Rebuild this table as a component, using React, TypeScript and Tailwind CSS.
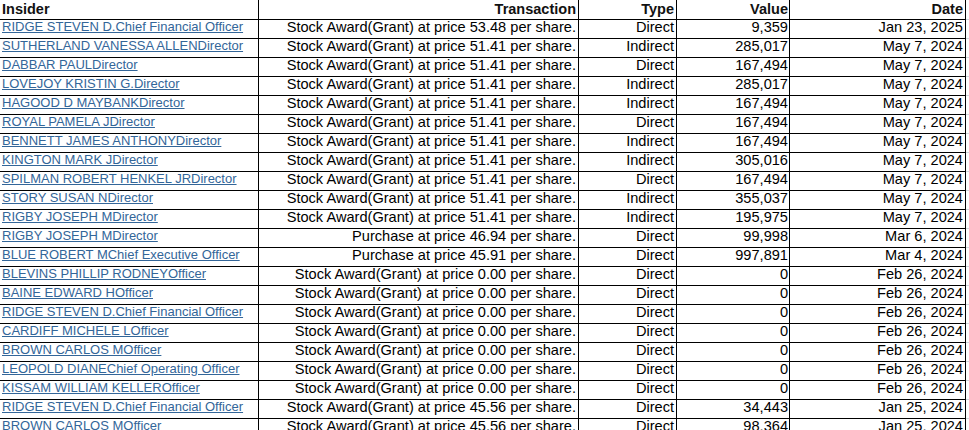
import React from "react";

type Row = [string, string, string, string, string];

const rows: Row[] = [
  ["RIDGE STEVEN D.Chief Financial Officer", "Stock Award(Grant) at price 53.48 per share.", "Direct", "9,359", "Jan 23, 2025"],
  ["SUTHERLAND VANESSA ALLENDirector", "Stock Award(Grant) at price 51.41 per share.", "Indirect", "285,017", "May 7, 2024"],
  ["DABBAR PAULDirector", "Stock Award(Grant) at price 51.41 per share.", "Direct", "167,494", "May 7, 2024"],
  ["LOVEJOY KRISTIN G.Director", "Stock Award(Grant) at price 51.41 per share.", "Indirect", "285,017", "May 7, 2024"],
  ["HAGOOD D MAYBANKDirector", "Stock Award(Grant) at price 51.41 per share.", "Indirect", "167,494", "May 7, 2024"],
  ["ROYAL PAMELA JDirector", "Stock Award(Grant) at price 51.41 per share.", "Direct", "167,494", "May 7, 2024"],
  ["BENNETT JAMES ANTHONYDirector", "Stock Award(Grant) at price 51.41 per share.", "Indirect", "167,494", "May 7, 2024"],
  ["KINGTON MARK JDirector", "Stock Award(Grant) at price 51.41 per share.", "Indirect", "305,016", "May 7, 2024"],
  ["SPILMAN ROBERT HENKEL JRDirector", "Stock Award(Grant) at price 51.41 per share.", "Direct", "167,494", "May 7, 2024"],
  ["STORY SUSAN NDirector", "Stock Award(Grant) at price 51.41 per share.", "Indirect", "355,037", "May 7, 2024"],
  ["RIGBY JOSEPH MDirector", "Stock Award(Grant) at price 51.41 per share.", "Indirect", "195,975", "May 7, 2024"],
  ["RIGBY JOSEPH MDirector", "Purchase at price 46.94 per share.", "Direct", "99,998", "Mar 6, 2024"],
  ["BLUE ROBERT MChief Executive Officer", "Purchase at price 45.91 per share.", "Direct", "997,891", "Mar 4, 2024"],
  ["BLEVINS PHILLIP RODNEYOfficer", "Stock Award(Grant) at price 0.00 per share.", "Direct", "0", "Feb 26, 2024"],
  ["BAINE EDWARD HOfficer", "Stock Award(Grant) at price 0.00 per share.", "Direct", "0", "Feb 26, 2024"],
  ["RIDGE STEVEN D.Chief Financial Officer", "Stock Award(Grant) at price 0.00 per share.", "Direct", "0", "Feb 26, 2024"],
  ["CARDIFF MICHELE LOfficer", "Stock Award(Grant) at price 0.00 per share.", "Direct", "0", "Feb 26, 2024"],
  ["BROWN CARLOS MOfficer", "Stock Award(Grant) at price 0.00 per share.", "Direct", "0", "Feb 26, 2024"],
  ["LEOPOLD DIANEChief Operating Officer", "Stock Award(Grant) at price 0.00 per share.", "Direct", "0", "Feb 26, 2024"],
  ["KISSAM WILLIAM KELLEROfficer", "Stock Award(Grant) at price 0.00 per share.", "Direct", "0", "Feb 26, 2024"],
  ["RIDGE STEVEN D.Chief Financial Officer", "Stock Award(Grant) at price 45.56 per share.", "Direct", "34,443", "Jan 25, 2024"],
  ["BROWN CARLOS MOfficer", "Stock Award(Grant) at price 45.56 per share.", "Direct", "98,364", "Jan 25, 2024"],
];

const grid = "grid grid-cols-[259px_320px_98px_113px_176px_3px]";
const cell = "border-r border-b border-black overflow-hidden whitespace-nowrap";

export default function App() {
  return (
    <div
      className="w-[969px] h-[430px] overflow-hidden bg-white text-black"
      style={{ fontFamily: "'Liberation Sans', Arial, sans-serif" }}
    >
      <div className={`${grid} h-[20px] font-bold text-[14.5px] leading-[19px] text-[#111]`}>
        <div className={`${cell} pl-[2px] text-left`}>Insider</div>
        <div className={`${cell} pr-[2px] text-right`}>Transaction</div>
        <div className={`${cell} pr-[2px] text-right`}>Type</div>
        <div className={`${cell} pr-[1px] text-right`}>Value</div>
        <div className={`${cell} pr-[2px] text-right`}>Date</div>
        <div className="border-b border-gray-300" />
      </div>
      {rows.map((r, i) => (
        <div key={i} className={`${grid} h-[19px]`}>
          <div className={`${cell} pl-[2px] text-[13px] leading-[14px]`}>
            <a href="#" className="text-[#336699] underline">
              {r[0]}
            </a>
          </div>
          <div className={`${cell} pr-[2px] text-right text-[14.6px] leading-[15px]`}>{r[1]}</div>
          <div className={`${cell} pr-[2px] text-right text-[14.6px] leading-[15px]`}>{r[2]}</div>
          <div className={`${cell} pr-[1px] text-right text-[14.6px] leading-[15px]`}>{r[3]}</div>
          <div className={`${cell} pr-[2px] text-right text-[14.6px] leading-[15px]`}>{r[4]}</div>
          <div className="border-b border-gray-300" />
        </div>
      ))}
    </div>
  );
}
